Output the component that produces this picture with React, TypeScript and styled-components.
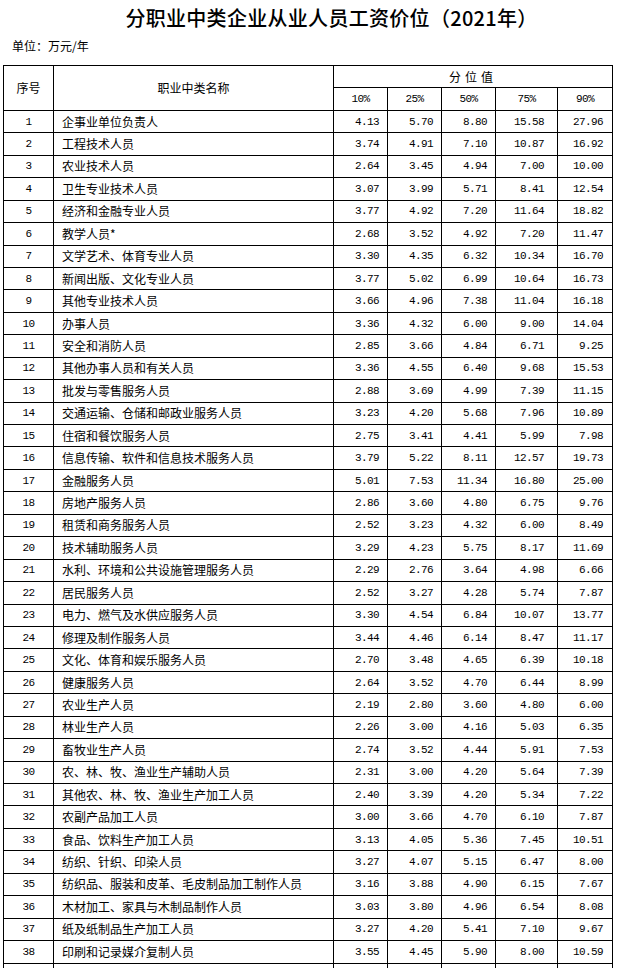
import styled, { createGlobalStyle } from 'styled-components';

const GlobalStyle = createGlobalStyle`
  html, body {
    margin: 0;
    padding: 0;
    background: #fff;
  }
  body {
    font-family: "Noto Sans CJK SC", "Liberation Sans", sans-serif;
    color: #000;
  }
`;

const Page = styled.div`
  width: 617px;
  display: flex;
  flex-direction: column;
`;

const Title = styled.h1`
  margin: 6px 0 0 46px;
  font-size: 20px;
  line-height: 24px;
  font-weight: 500;
  text-align: center;
  letter-spacing: 0.3px;
`;

const Unit = styled.div`
  margin: 8px 0 0 12px;
  font-size: 12px;
  line-height: 16px;
`;

const Table = styled.table`
  margin: 11px 0 0 3px;
  width: 609px;
  border-collapse: collapse;
  table-layout: fixed;
  font-size: 12px;
`;

const Row = styled.tr`
  height: 22.45px;
`;

const HeadCell = styled.th<{ $spaced?: boolean }>`
  border: 1px solid #000;
  padding: 0;
  font-weight: 400;
  text-align: center;
  line-height: 14px;
  letter-spacing: ${(p) => (p.$spaced ? '4px' : '0')};
`;

const PctCell = styled.th`
  border: 1px solid #000;
  padding: 0;
  font-weight: 400;
  text-align: center;
  font-family: "Liberation Mono", monospace;
  font-size: 11px;
  letter-spacing: -0.6px;
`;

const NoCell = styled.td`
  border: 1px solid #000;
  padding: 0;
  text-align: center;
  font-family: "Liberation Mono", monospace;
  font-size: 11px;
  letter-spacing: -0.6px;
`;

const NameCell = styled.td`
  border: 1px solid #000;
  padding: 0 0 0 8px;
  text-align: left;
  white-space: nowrap;
  overflow: hidden;
  line-height: 14px;
`;

const NumCell = styled.td<{ $pad: number }>`
  border: 1px solid #000;
  padding: 0 ${(p) => p.$pad}px 0 0;
  text-align: right;
  font-family: "Liberation Mono", monospace;
  font-size: 11px;
  letter-spacing: -0.6px;
`;

const colWidths = [50, 280, 54, 54, 54, 62, 55];
const pads = [8, 8, 8, 13, 9];
const pcts = ['10%', '25%', '50%', '75%', '90%'];

type Item = [string, string[]];

const rows: Item[] = [
  ['企事业单位负责人', ['4.13', '5.70', '8.80', '15.58', '27.96']],
  ['工程技术人员', ['3.74', '4.91', '7.10', '10.87', '16.92']],
  ['农业技术人员', ['2.64', '3.45', '4.94', '7.00', '10.00']],
  ['卫生专业技术人员', ['3.07', '3.99', '5.71', '8.41', '12.54']],
  ['经济和金融专业人员', ['3.77', '4.92', '7.20', '11.64', '18.82']],
  ['教学人员*', ['2.68', '3.52', '4.92', '7.20', '11.47']],
  ['文学艺术、体育专业人员', ['3.30', '4.35', '6.32', '10.34', '16.70']],
  ['新闻出版、文化专业人员', ['3.77', '5.02', '6.99', '10.64', '16.73']],
  ['其他专业技术人员', ['3.66', '4.96', '7.38', '11.04', '16.18']],
  ['办事人员', ['3.36', '4.32', '6.00', '9.00', '14.04']],
  ['安全和消防人员', ['2.85', '3.66', '4.84', '6.71', '9.25']],
  ['其他办事人员和有关人员', ['3.36', '4.55', '6.40', '9.68', '15.53']],
  ['批发与零售服务人员', ['2.88', '3.69', '4.99', '7.39', '11.15']],
  ['交通运输、仓储和邮政业服务人员', ['3.23', '4.20', '5.68', '7.96', '10.89']],
  ['住宿和餐饮服务人员', ['2.75', '3.41', '4.41', '5.99', '7.98']],
  ['信息传输、软件和信息技术服务人员', ['3.79', '5.22', '8.11', '12.57', '19.73']],
  ['金融服务人员', ['5.01', '7.53', '11.34', '16.80', '25.00']],
  ['房地产服务人员', ['2.86', '3.60', '4.80', '6.75', '9.76']],
  ['租赁和商务服务人员', ['2.52', '3.23', '4.32', '6.00', '8.49']],
  ['技术辅助服务人员', ['3.29', '4.23', '5.75', '8.17', '11.69']],
  ['水利、环境和公共设施管理服务人员', ['2.29', '2.76', '3.64', '4.98', '6.66']],
  ['居民服务人员', ['2.52', '3.27', '4.28', '5.74', '7.87']],
  ['电力、燃气及水供应服务人员', ['3.30', '4.54', '6.84', '10.07', '13.77']],
  ['修理及制作服务人员', ['3.44', '4.46', '6.14', '8.47', '11.17']],
  ['文化、体育和娱乐服务人员', ['2.70', '3.48', '4.65', '6.39', '10.18']],
  ['健康服务人员', ['2.64', '3.52', '4.70', '6.44', '8.99']],
  ['农业生产人员', ['2.19', '2.80', '3.60', '4.80', '6.00']],
  ['林业生产人员', ['2.26', '3.00', '4.16', '5.03', '6.35']],
  ['畜牧业生产人员', ['2.74', '3.52', '4.44', '5.91', '7.53']],
  ['农、林、牧、渔业生产辅助人员', ['2.31', '3.00', '4.20', '5.64', '7.39']],
  ['其他农、林、牧、渔业生产加工人员', ['2.40', '3.39', '4.20', '5.34', '7.22']],
  ['农副产品加工人员', ['3.00', '3.66', '4.70', '6.10', '7.87']],
  ['食品、饮料生产加工人员', ['3.13', '4.05', '5.36', '7.45', '10.51']],
  ['纺织、针织、印染人员', ['3.27', '4.07', '5.15', '6.47', '8.00']],
  ['纺织品、服装和皮革、毛皮制品加工制作人员', ['3.16', '3.88', '4.90', '6.15', '7.67']],
  ['木材加工、家具与木制品制作人员', ['3.03', '3.80', '4.96', '6.54', '8.08']],
  ['纸及纸制品生产加工人员', ['3.27', '4.20', '5.41', '7.10', '9.67']],
  ['印刷和记录媒介复制人员', ['3.55', '4.45', '5.90', '8.00', '10.59']],
];

export default function App() {
  return (
    <Page>
      <GlobalStyle />
      <Title>分职业中类企业从业人员工资价位（2021年）</Title>
      <Unit>单位：万元/年</Unit>
      <Table>
        <colgroup>
          {colWidths.map((w, i) => (
            <col key={i} style={{ width: w }} />
          ))}
        </colgroup>
        <thead>
          <Row>
            <HeadCell rowSpan={2}>序号</HeadCell>
            <HeadCell rowSpan={2}>职业中类名称</HeadCell>
            <HeadCell colSpan={5} $spaced>
              分位值
            </HeadCell>
          </Row>
          <Row>
            {pcts.map((p) => (
              <PctCell key={p}>{p}</PctCell>
            ))}
          </Row>
        </thead>
        <tbody>
          {rows.map(([name, vals], i) => (
            <Row key={i}>
              <NoCell>{i + 1}</NoCell>
              <NameCell>{name}</NameCell>
              {vals.map((v, j) => (
                <NumCell key={j} $pad={pads[j]}>
                  {v}
                </NumCell>
              ))}
            </Row>
          ))}
          {/* the next row runs past the bottom of the view */}
          <Row>
            <NoCell />
            <NameCell />
            {pads.map((p, j) => (
              <NumCell key={j} $pad={p} />
            ))}
          </Row>
        </tbody>
      </Table>
    </Page>
  );
}
